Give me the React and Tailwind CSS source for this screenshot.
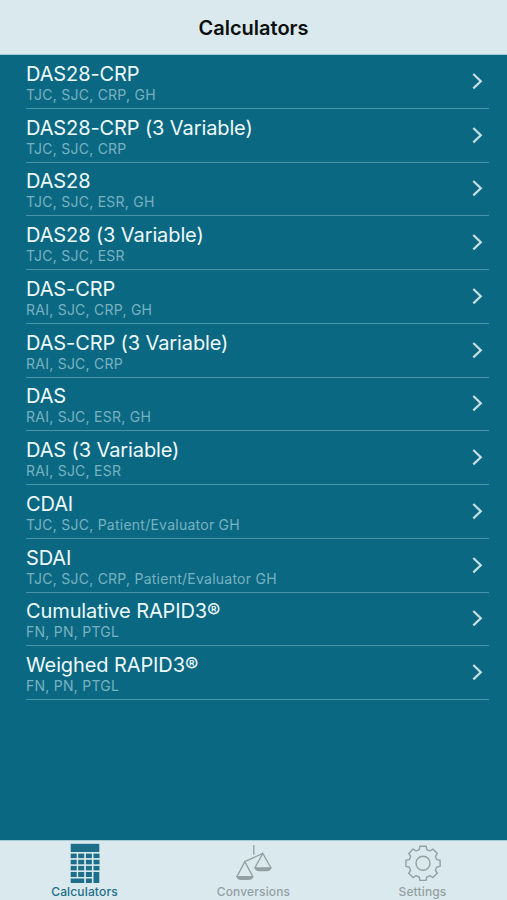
import React, { useState } from 'react'

const calculators = [
  { title: 'DAS28-CRP', detail: 'TJC, SJC, CRP, GH' },
  { title: 'DAS28-CRP (3 Variable)', detail: 'TJC, SJC, CRP' },
  { title: 'DAS28', detail: 'TJC, SJC, ESR, GH' },
  { title: 'DAS28 (3 Variable)', detail: 'TJC, SJC, ESR' },
  { title: 'DAS-CRP', detail: 'RAI, SJC, CRP, GH' },
  { title: 'DAS-CRP (3 Variable)', detail: 'RAI, SJC, CRP' },
  { title: 'DAS', detail: 'RAI, SJC, ESR, GH' },
  { title: 'DAS (3 Variable)', detail: 'RAI, SJC, ESR' },
  { title: 'CDAI', detail: 'TJC, SJC, Patient/Evaluator GH' },
  { title: 'SDAI', detail: 'TJC, SJC, CRP, Patient/Evaluator GH' },
  { title: 'Cumulative RAPID3®', detail: 'FN, PN, PTGL' },
  { title: 'Weighed RAPID3®', detail: 'FN, PN, PTGL' },
]

function CalculatorIcon() {
  return (
    <svg width="40" height="40" viewBox="0 0 40 40" fill="currentColor">
      <path d="M5.7 0.8h28.6v8.2H5.7z" />
      {[10.6, 16.8, 22.9].map((y) =>
        [5.7, 13.2, 20.9, 28.5].map((x) => <rect key={x + '-' + y} x={x} y={y} width="6" height="4.5" />)
      )}
      <path d="M5.7 29h6v4.9h-6zM13.2 29h6v4.9h-6zM20.9 29h6v4.9h-6z" />
      <path d="M28.5 29h5.8v11h-5.8zM5.7 35.4h13.5V40H5.7zM20.9 35.4h6V40h-6z" />
    </svg>
  )
}

function ScaleIcon() {
  return (
    <svg width="40" height="40" viewBox="0.5 0 40 40" fill="none" stroke="currentColor" strokeWidth="1.3">
      <path d="M20.3 2v9.8M11.3 18.6 29.3 10.4" />
      <path d="M3.4 33.6 11.3 18.6l8.1 15M21.4 24.8l7.9-14.4 8.1 14.4" />
      <path d="M2.5 33h17.8c-.8 3-3.3 4-5.2 4H7.7c-2 0-4.4-1-5.2-4zM20.6 24.2h17.8c-.8 3-3.3 4-5.2 4h-7.4c-2 0-4.4-1-5.2-4z" fill="currentColor" stroke="none" />
    </svg>
  )
}

// eight teeth, each one a flat top with slightly slanted sides
function gearPoints() {
  const tooth = [[-5.2, -13], [-3.7, -13.9], [-3.1, -17.1], [3.1, -17.1], [3.7, -13.9], [5.2, -13]]
  const points = []
  for (let i = 0; i < 8; i++) {
    const a = (i * Math.PI) / 4
    tooth.forEach(([x, y]) => {
      const px = 20 + x * Math.cos(a) - y * Math.sin(a)
      const py = 20 + x * Math.sin(a) + y * Math.cos(a)
      points.push(px.toFixed(2) + ',' + py.toFixed(2))
    })
  }
  return points.join(' ')
}

function GearIcon() {
  return (
    <svg width="40" height="40" viewBox="0 -0.3 40 40" fill="none" stroke="currentColor" strokeWidth="1.4" strokeLinejoin="round">
      <polygon points={gearPoints()} />
      <circle cx="20" cy="20" r="7" />
    </svg>
  )
}

const tabs = [
  { name: 'Calculators', Icon: CalculatorIcon },
  { name: 'Conversions', Icon: ScaleIcon },
  { name: 'Settings', Icon: GearIcon },
]

function Row({ title, detail }) {
  return (
    <li className="flex h-[53.76px] items-center justify-between border-b border-[#4b93a6] pr-[6px]">
      <div className="whitespace-nowrap pt-[2px]">
        <div className="text-[20px] leading-[24px] tracking-[-0.11px] text-[#eefafc]">{title}</div>
        <div className="text-[14px] leading-[17px] tracking-[0.25px] text-[#78b2c1]">{detail}</div>
      </div>
      <svg width="11" height="17" viewBox="0 0 11 17" fill="none" stroke="#c5dfe3" strokeWidth="2.2">
        <path d="M1.3 1l7.5 7.2-7.5 7.2" />
      </svg>
    </li>
  )
}

export default function App() {
  const [active, setActive] = useState('Calculators')

  return (
    <div className="flex h-screen w-full flex-col overflow-hidden bg-[#0b6882] font-['Inter',sans-serif]">
      <header className="flex h-[55px] shrink-0 items-center justify-center border-b border-[#a3cdd3] bg-[#d9e9ed] pt-[2px]">
        <h1 className="text-[20px] font-semibold text-[#0b0f10]">Calculators</h1>
      </header>

      <ul className="flex-1 pl-[26px] pr-[18px]">
        {calculators.map((c) => (
          <Row key={c.title} title={c.title} detail={c.detail} />
        ))}
      </ul>

      <nav className="grid h-[60px] shrink-0 grid-cols-3 border-t border-[#a3cdd3] bg-[#d9e9ed]">
        {tabs.map(({ name, Icon }) => (
          <button
            key={name}
            onClick={() => setActive(name)}
            className={'flex flex-col items-center pt-[2px] ' + (active === name ? 'text-[#1d6e89]' : 'text-[#949fa3]')}
          >
            <Icon />
            <span className="mt-[1px] text-[12px] font-medium leading-[15px] tracking-[0.15px]">{name}</span>
          </button>
        ))}
      </nav>
    </div>
  )
}
